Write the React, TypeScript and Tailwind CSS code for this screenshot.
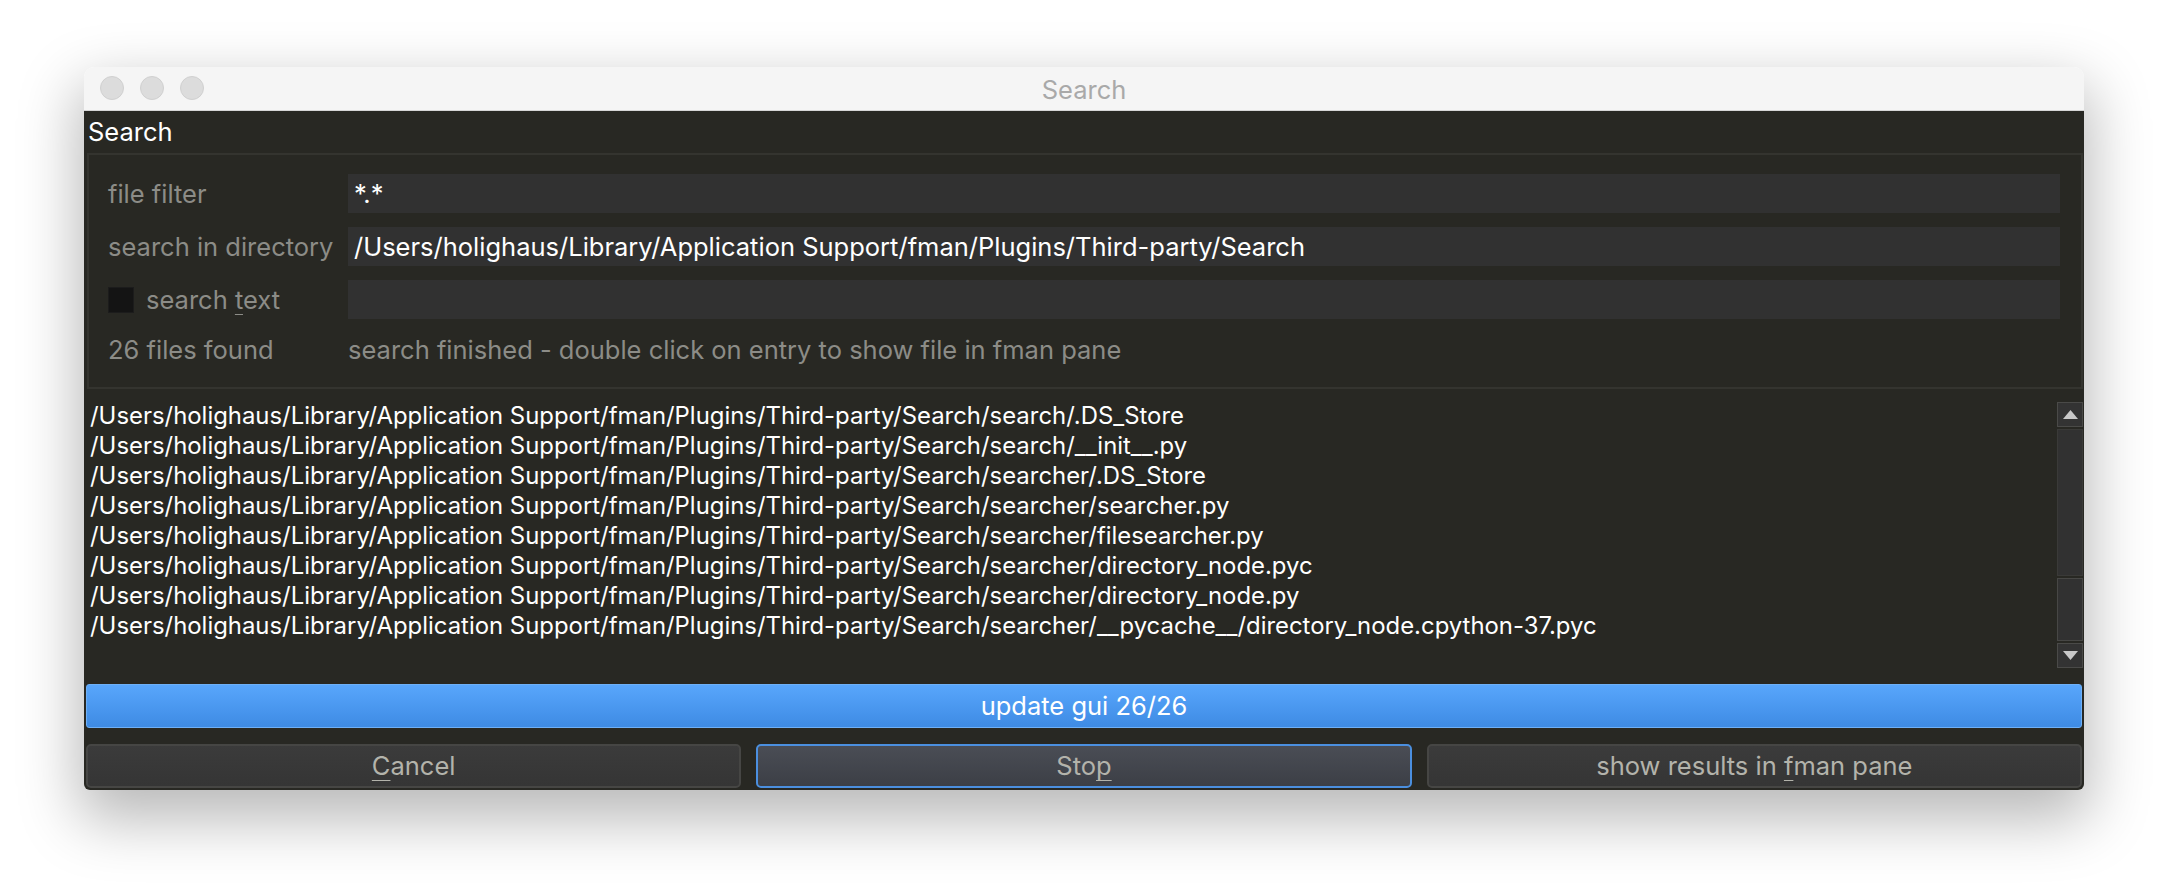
import React from 'react';

const files = [
    '/Users/holighaus/Library/Application Support/fman/Plugins/Third-party/Search/search/.DS_Store',
    '/Users/holighaus/Library/Application Support/fman/Plugins/Third-party/Search/search/__init__.py',
    '/Users/holighaus/Library/Application Support/fman/Plugins/Third-party/Search/searcher/.DS_Store',
    '/Users/holighaus/Library/Application Support/fman/Plugins/Third-party/Search/searcher/searcher.py',
    '/Users/holighaus/Library/Application Support/fman/Plugins/Third-party/Search/searcher/filesearcher.py',
    '/Users/holighaus/Library/Application Support/fman/Plugins/Third-party/Search/searcher/directory_node.pyc',
    '/Users/holighaus/Library/Application Support/fman/Plugins/Third-party/Search/searcher/directory_node.py',
    '/Users/holighaus/Library/Application Support/fman/Plugins/Third-party/Search/searcher/__pycache__/directory_node.cpython-37.pyc',
];

const font = { fontFamily: 'Inter, "Liberation Sans", sans-serif' };

const Field: React.FC<{ value?: string }> = ({ value }) => (
    <div className="h-[39px] bg-[#313131] flex items-center px-[6px] text-white">{value}</div>
);

const Button: React.FC<{ focused?: boolean; children: React.ReactNode }> = ({ focused, children }) => (
    <div
        className={
            focused
                ? 'flex-1 flex items-center justify-center rounded-[5px] border-2 border-[#4b8fdf] bg-gradient-to-b from-[#4a4d55] to-[#3c3f46] text-[#b3b3ab]'
                : 'flex-1 flex items-center justify-center rounded-[5px] border-2 border-[#464644] bg-gradient-to-b from-[#3b3b3b] to-[#353535] text-[#b3b3ab]'
        }
    >
        {children}
    </div>
);

const Arrow: React.FC<{ down?: boolean }> = ({ down }) => (
    <div className="h-[25px] border border-[#4a4a48] bg-[#333333] flex items-center justify-center">
        <svg width="15" height="9" viewBox="0 0 15 9">
            {down ? <polygon points="0,0 15,0 7.5,9" fill="#c8c8c8" /> : <polygon points="0,9 15,9 7.5,0" fill="#c8c8c8" />}
        </svg>
    </div>
);

export default function App() {
    return (
        <div className="min-h-screen w-full bg-white pt-[67px] pl-[84px]" style={font}>
            <div className="w-[2000px] h-[723px] flex flex-col rounded-[10px] shadow-[0_24px_60px_6px_rgba(0,0,0,0.28)] text-[25.5px] leading-[30px]">
                {/* title bar */}
                <div className="relative h-[44px] shrink-0 rounded-t-[10px] bg-[#f5f5f5] border-b border-[#d6d6d6] flex items-center justify-center pt-[3px]">
                    <div className="absolute left-[16px] top-[9px] flex gap-[16px]">
                        <span className="w-[24px] h-[24px] rounded-full bg-[#dcdcdc] border border-[#d0d0d0]" />
                        <span className="w-[24px] h-[24px] rounded-full bg-[#dcdcdc] border border-[#d0d0d0]" />
                        <span className="w-[24px] h-[24px] rounded-full bg-[#dcdcdc] border border-[#d0d0d0]" />
                    </div>
                    <span className="text-[#a9a9a9]">Search</span>
                </div>

                <div className="flex-1 flex flex-col bg-[#282823] rounded-b-[6px]">
                    <div className="h-[42px] flex items-center pl-[4px] text-white">Search</div>

                    {/* group box */}
                    <div className="ml-[3px] mr-px h-[236px] border-2 border-[#34342f] pt-[19px] pl-[19px] pr-[21px]">
                        <div className="grid grid-cols-[240px_1fr] gap-y-[14px]">
                            <div className="h-[39px] flex items-center text-[#8c8c87]">file filter</div>
                            <Field value="*.*" />
                            <div className="h-[39px] flex items-center text-[#8c8c87]">search in directory</div>
                            <Field value="/Users/holighaus/Library/Application Support/fman/Plugins/Third-party/Search" />
                            <div className="h-[39px] flex items-center gap-[12px] text-[#8c8c87]">
                                <span className="w-[26px] h-[26px] bg-[#141414] border border-[#1c1c1c]" />
                                <span>
                                    search <span className="underline underline-offset-[5px] decoration-1">t</span>ext
                                </span>
                            </div>
                            <Field />
                            <div className="h-[34px] flex items-center text-[#8c8c87]">26 files found</div>
                            <div className="h-[34px] flex items-center text-[#8c8c87]">
                                search finished - double click on entry to show file in fman pane
                            </div>
                        </div>
                    </div>

                    {/* results list */}
                    <div className="h-[295px] flex pl-[6px]">
                        <div className="flex-1 pt-[12px] text-white text-[23.9px] leading-[30px]">
                            {files.map((f) => (
                                <div key={f}>{f}</div>
                            ))}
                        </div>
                        <div className="w-[26px] mt-[13px] mr-px h-[266px] flex flex-col gap-[2px]">
                            <Arrow />
                            <div className="flex-1 bg-[#313131] border border-[#3a3a38]" />
                            <div className="h-[63px] bg-[#313131] border border-[#474745]" />
                            <Arrow down />
                        </div>
                    </div>

                    {/* progress */}
                    <div className="mx-[2px] h-[44px] rounded-[3px] border border-[#6eb0f7] bg-gradient-to-b from-[#58a6fc] to-[#3e8be4] flex items-center justify-center text-white">
                        update gui 26/26
                    </div>

                    {/* buttons */}
                    <div className="mt-[16px] mx-[2px] h-[44px] flex gap-[15px]">
                        <Button>
                            <span>
                                <span className="underline underline-offset-[5px] decoration-1">C</span>ancel
                            </span>
                        </Button>
                        <Button focused>
                            <span>
                                Sto<span className="underline underline-offset-[5px] decoration-1">p</span>
                            </span>
                        </Button>
                        <Button>
                            <span>
                                show results in <span className="underline underline-offset-[5px] decoration-1">f</span>man pane
                            </span>
                        </Button>
                    </div>
                </div>
            </div>
        </div>
    );
}
